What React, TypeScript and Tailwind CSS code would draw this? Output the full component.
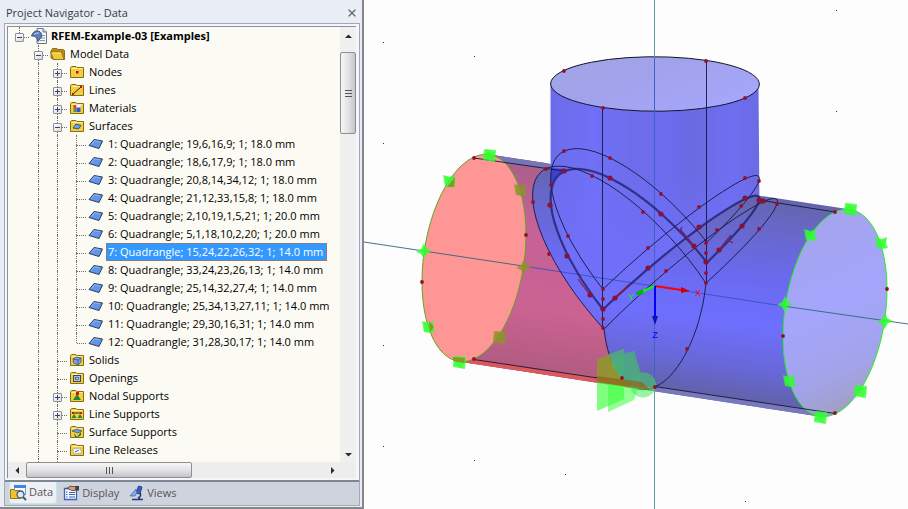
import { useState } from 'react';
import { X } from 'lucide-react';

type Guide = 'none' | 'line' | 'tee' | 'end' | 'plus' | 'minus' | 'root';
type IconName =
    | 'model'
    | 'open'
    | 'nodes'
    | 'lines'
    | 'materials'
    | 'surfaces'
    | 'surface'
    | 'solids'
    | 'openings'
    | 'nodal'
    | 'line'
    | 'surfaceSupport'
    | 'release';

interface TreeRow {
    label: string;
    icon: IconName;
    guides: Guide[];
}

type Point = [number, number];

const surfaces = [
    '1: Quadrangle; 19,6,16,9; 1; 18.0 mm',
    '2: Quadrangle; 18,6,17,9; 1; 18.0 mm',
    '3: Quadrangle; 20,8,14,34,12; 1; 18.0 mm',
    '4: Quadrangle; 21,12,33,15,8; 1; 18.0 mm',
    '5: Quadrangle; 2,10,19,1,5,21; 1; 20.0 mm',
    '6: Quadrangle; 5,1,18,10,2,20; 1; 20.0 mm',
    '7: Quadrangle; 15,24,22,26,32; 1; 14.0 mm',
    '8: Quadrangle; 33,24,23,26,13; 1; 14.0 mm',
    '9: Quadrangle; 25,14,32,27,4; 1; 14.0 mm',
    '10: Quadrangle; 25,34,13,27,11; 1; 14.0 mm',
    '11: Quadrangle; 29,30,16,31; 1; 14.0 mm',
    '12: Quadrangle; 31,28,30,17; 1; 14.0 mm',
];

const rows: TreeRow[] = [
    { label: 'RFEM-Example-03 [Examples]', icon: 'model', guides: ['root'] },
    { label: 'Model Data', icon: 'open', guides: ['none', 'minus'] },
    { label: 'Nodes', icon: 'nodes', guides: ['none', 'line', 'plus'] },
    { label: 'Lines', icon: 'lines', guides: ['none', 'line', 'plus'] },
    { label: 'Materials', icon: 'materials', guides: ['none', 'line', 'plus'] },
    { label: 'Surfaces', icon: 'surfaces', guides: ['none', 'line', 'minus'] },
    ...surfaces.map((label, i): TreeRow => ({
        label,
        icon: 'surface',
        guides: ['none', 'line', 'line', i === surfaces.length - 1 ? 'end' : 'tee'],
    })),
    { label: 'Solids', icon: 'solids', guides: ['none', 'line', 'tee'] },
    { label: 'Openings', icon: 'openings', guides: ['none', 'line', 'tee'] },
    { label: 'Nodal Supports', icon: 'nodal', guides: ['none', 'line', 'plus'] },
    { label: 'Line Supports', icon: 'line', guides: ['none', 'line', 'plus'] },
    { label: 'Surface Supports', icon: 'surfaceSupport', guides: ['none', 'line', 'tee'] },
    { label: 'Line Releases', icon: 'release', guides: ['none', 'line', 'tee'] },
];

function FolderBadge({ name }: { name: IconName }) {
    switch (name) {
        case 'nodes':
            return <rect x="7" y="6" width="2.500" height="2.500" fill="#e00000" />;
        case 'lines':
            return (
                <g>
                    <path d="M4 11 L12 4" stroke="#222" strokeWidth="1" />
                    <path d="M3 10h2v2h-2z M11 3h2v2h-2z" fill="#e00000" />
                </g>
            );
        case 'materials':
            return (
                <g>
                    <path d="M4.500 4h3v4h-3z" fill="#e23b3b" />
                    <path d="M7.500 4h4v4h-4z" fill="#f6f6f6" />
                    <path d="M4.500 8h3v3h-3z" fill="#3aa544" />
                    <path d="M7.500 6.500h4v4.500h-4z" fill="#3457d8" />
                </g>
            );
        case 'surfaces':
            return <path d="M4 9 L7 5 L12 6.500 L9.500 10z" fill="#6ea0ee" stroke="#25406f" strokeWidth=".8" />;
        case 'solids':
            return (
                <g stroke="#31477c" strokeWidth=".7">
                    <path d="M4 6 L7 4 L12 5 L12 9 L9 12 L4.500 10z" fill="#7ea0dc" />
                    <path d="M4 6 L9 7 L12 5 M9 7 L9 12" fill="none" />
                </g>
            );
        case 'openings':
            return (
                <g>
                    <rect x="4.500" y="4.500" width="7" height="6" fill="#a9c4f4" stroke="#32486f" />
                    <rect x="6.500" y="6.500" width="3" height="2" fill="#f3d64c" stroke="#32486f" strokeWidth=".7" />
                </g>
            );
        case 'nodal':
            return (
                <g>
                    <path d="M8 5 L12 11 L4 11z" fill="#1f8a2c" />
                    <rect x="7" y="3" width="3" height="3" fill="#e01010" />
                </g>
            );
        case 'line':
            return (
                <g>
                    <path d="M5 7 L7.500 11 L2.500 11z M11 7 L13.500 11 L8.500 11z" fill="#1f8a2c" />
                    <path d="M4 6 H12" stroke="#222" />
                    <path d="M3 5h2v2h-2z M11 5h2v2h-2z" fill="#e01010" />
                </g>
            );
        case 'surfaceSupport':
            return (
                <g>
                    <path d="M3 6 L8 4 L13 6 L9 8z" fill="#6e9bdf" stroke="#28456f" strokeWidth=".6" />
                    <path d="M5 8 L8 12 L12 7 L12 10 L9 12 L6 12z" fill="#256a4a" />
                </g>
            );
        case 'release':
            return (
                <g>
                    <path d="M3.500 6 L11 5 L13 10 L5 11z" fill="#f4f4f0" stroke="#999" strokeWidth=".6" />
                    <path d="M6 9 L10 7" stroke="#3e6ed2" />
                </g>
            );
        default:
            return null;
    }
}

function TreeIcon({ name }: { name: IconName }) {
    if (name === 'model') {
        return (
            <svg viewBox="0 0 16 16" className="h-4 w-4" aria-hidden="true">
                <path d="M6 .5 H12 L15.500 4 V15.500 H6z" fill="#f4f6fa" stroke="#6b7686" />
                <path d="M12 .5 V4 H15.500" fill="#cfd6e0" stroke="#6b7686" />
                <path d="M10 7.500h4M10 10h4M9 12.500h5" stroke="#8b96a8" />
                <path d="M.5 8 Q2 2.500 7 3 Q11.500 4 10.500 9 L7 13.500 Q6 7.500 .5 8z" fill="#5b80bd" stroke="#27426f" strokeWidth=".8" />
                <path d="M3 6.500 Q5 4.500 8 5" stroke="#c3d6f3" fill="none" />
            </svg>
        );
    }
    if (name === 'surface') {
        return (
            <svg viewBox="0 0 16 12" className="h-3 w-4" aria-hidden="true">
                <path d="M1 7.500 L6 1.500 L14.500 3 L11 10.500z" fill="#6095e8" stroke="#2b3d59" />
                <path d="M3.500 6.500 L6.500 2.800 L12 3.700" stroke="#8fb8f8" fill="none" />
            </svg>
        );
    }
    if (name === 'open') {
        return (
            <svg viewBox="0 0 16 14" className="h-[14px] w-4" aria-hidden="true">
                <path d="M1 4 V11 L3.500 12.500 H14.500 V3.500 L13 2.500 H8 L7 1.500 H2.500z" fill="#b98d12" stroke="#7a5c08" strokeWidth=".8" />
                <path d="M.5 5 H11.500 L14 12.500 H3.500z" fill="#edc93c" stroke="#8a6a0c" strokeWidth=".8" />
                <path d="M2 6 H11" stroke="#fbe893" />
            </svg>
        );
    }
    return (
        <svg viewBox="0 0 16 14" className="h-[14px] w-4" aria-hidden="true">
            <path d="M1.500 2.500 L2.500 1.500 H7 L8 2.500 H14.500 V12.500 H1.500z" fill="#f2cf3f" stroke="#8a6c13" />
            <path d="M2.500 3.500 H13.500" stroke="#fdf0a4" />
            <FolderBadge name={name} />
        </svg>
    );
}

function GuideCell({ kind, label }: { kind: Guide; label: string }) {
    const isBox = kind === 'plus' || kind === 'minus' || kind === 'root';
    const above = kind !== 'none';
    const below = kind === 'line' || kind === 'tee' || kind === 'plus' || kind === 'minus';
    const arm = kind === 'tee' || kind === 'end' || isBox;

    return (
        <span className="relative flex h-full w-[19px] shrink-0 items-center justify-center">
            {above && <span className="absolute left-[9px] top-0 h-[10px] border-l border-dotted border-[#6e6e6e]" />}
            {below && <span className="absolute bottom-0 left-[9px] h-2 border-l border-dotted border-[#6e6e6e]" />}
            {arm && <span className="absolute left-[10px] right-0 top-[10px] border-t border-dotted border-[#6e6e6e]" />}
            {isBox && (
                <button
                    type="button"
                    aria-label={(kind === 'plus' ? 'Expand ' : 'Collapse ') + label}
                    className="relative top-px flex h-[9px] w-[9px] items-center justify-center rounded-[1px] border border-[#8e8f8f] bg-gradient-to-br from-white to-[#dcdcdc]"
                >
                    <span className="absolute h-px w-[5px] bg-[#31408c]" />
                    {kind === 'plus' && <span className="absolute h-[5px] w-px bg-[#31408c]" />}
                </button>
            )}
        </span>
    );
}

function Tree() {
    const [selected, setSelected] = useState(surfaces[6]);

    return (
        <div className="flex min-h-0 min-w-0 flex-1 flex-col overflow-hidden bg-[#fbfbf3] pl-[2px]">
            <ul role="tree" aria-label="Project Navigator">
                {rows.map((row) => (
                    <li
                        key={row.label}
                        role="treeitem"
                        aria-selected={row.label === selected}
                        onClick={() => setSelected(row.label)}
                        className="flex h-[18px] items-center whitespace-nowrap"
                    >
                        {row.guides.map((kind, i) => (
                            <GuideCell key={i} kind={kind} label={row.label} />
                        ))}
                        <span className="flex w-5 shrink-0 justify-center">
                            <TreeIcon name={row.icon} />
                        </span>
                        <span
                            className={
                                row.label === selected
                                    ? 'h-[18px] bg-[#3399ff] pl-[2px] pr-1 leading-[18px] text-white outline-1 -outline-offset-1 outline-dotted outline-[#c8651a]'
                                    : row.icon === 'model'
                                      ? 'pl-[2px] font-bold leading-[18px]'
                                      : 'pl-[2px] leading-[18px]'
                            }
                        >
                            {row.label}
                        </span>
                    </li>
                ))}
            </ul>
            {/* guides run on to the lower edge of the list */}
            <div className="flex min-h-0 flex-1 gap-[18px] pl-7">
                <span className="border-l border-dotted border-[#6e6e6e]" />
                <span className="border-l border-dotted border-[#6e6e6e]" />
            </div>
        </div>
    );
}

function Arrow({ d }: { d: string }) {
    return (
        <svg viewBox="0 0 7 7" className="h-[7px] w-[7px]" aria-hidden="true">
            <path d={d} fill="#2b2b2b" />
        </svg>
    );
}

function Navigator() {
    return (
        <aside className="flex w-91 shrink-0 flex-col border-b-2 border-r-2 border-[#84868c] bg-[#e9edf6] pb-px pl-1 pr-[2px] pt-[3px]">
            <header className="flex h-5 items-center justify-between pl-[2px] text-[#3c3c3c]">
                <h1 className="leading-5">Project Navigator - Data</h1>
                <button type="button" aria-label="Close" className="flex h-4 w-4 items-center justify-center text-[#666]">
                    <X size={12} strokeWidth={2.5} />
                </button>
            </header>

            <div className="flex min-h-0 flex-1 flex-col border border-[#a3a8b8] bg-[#cfd3dd]">
                <div className="flex min-h-0 flex-1 flex-col border-b-2 border-[#7d8694] bg-[#f4f6fb] py-[2px] pl-[2px] pr-[3px]">
                    <div className="flex min-h-0 flex-1 flex-col border-l border-t border-[#8c909a]">
                        <div className="flex min-h-0 flex-1">
                            <Tree />
                            <div className="flex w-4 shrink-0 flex-col bg-[#f0f0f0]">
                                <button type="button" aria-label="Scroll up" className="flex h-[25px] items-start justify-center pt-[6px]">
                                    <Arrow d="M3.500 1.500 L7 5 H0z" />
                                </button>
                                <div className="flex h-[82px] flex-col items-center justify-center gap-[2px] rounded-[2px] border border-[#8f8f8f] bg-gradient-to-r from-[#f6f6f6] via-[#e4e4e6] to-[#c4c5ca]">
                                    <span className="h-px w-[7px] bg-[#555]" />
                                    <span className="h-px w-[7px] bg-[#555]" />
                                    <span className="h-px w-[7px] bg-[#555]" />
                                </div>
                                <button type="button" aria-label="Scroll down" className="mt-auto flex h-4 items-center justify-center">
                                    <Arrow d="M3.500 5.500 L0 2 H7z" />
                                </button>
                            </div>
                        </div>
                        <div className="flex h-4 shrink-0 bg-[#ededed] pr-4">
                            <button type="button" aria-label="Scroll left" className="flex w-[18px] items-center justify-center">
                                <Arrow d="M1.500 3.500 L5 0 V7z" />
                            </button>
                            <div className="flex w-1/2 items-center justify-center gap-[2px] rounded-[2px] border border-[#8f8f8f] bg-gradient-to-b from-[#f6f6f6] via-[#e4e4e6] to-[#c4c5ca]">
                                <span className="h-[7px] w-px bg-[#555]" />
                                <span className="h-[7px] w-px bg-[#555]" />
                                <span className="h-[7px] w-px bg-[#555]" />
                            </div>
                            <button type="button" aria-label="Scroll right" className="ml-auto flex w-4 items-center justify-center">
                                <Arrow d="M5.500 3.500 L2 0 V7z" />
                            </button>
                        </div>
                    </div>
                </div>

                <nav className="flex h-[23px] shrink-0 items-start gap-[6px] pl-1 text-[#54565c]">
                    <button type="button" className="flex h-[22px] items-center gap-[2px] rounded-b-[3px] border border-t-0 border-[#c3e8de] bg-[#eef0f5] pr-[3px]">
                        <svg viewBox="0 0 17 16" className="h-4 w-[17px]" aria-hidden="true">
                            <rect x="4.500" y=".5" width="11" height="9" fill="#f8fbff" stroke="#6f9be0" />
                            <rect x="4" y="0" width="12" height="3" fill="#3f83ec" />
                            <path d="M.5 4.500 H4 L5 5.500 H9.500 V13.500 H.5z" fill="#f0c22e" stroke="#9c7611" />
                            <circle cx="10.500" cy="9.500" r="3.500" fill="#d6e8fb" stroke="#4a5668" strokeWidth="1.300" />
                            <path d="M13 12 L16 15" stroke="#4a5668" strokeWidth="2" />
                        </svg>
                        Data
                    </button>
                    <button type="button" className="flex h-[22px] items-center gap-[2px]">
                        <svg viewBox="0 0 17 16" className="h-4 w-[17px]" aria-hidden="true">
                            <path d="M1.500 3.500 H13.500 V14.500 H1.500z" fill="#f5f8ff" stroke="#3f62b4" strokeWidth="1.300" />
                            <path d="M3 7h1.500M3 9.500h1.500M3 12h1.500" stroke="#3f62b4" />
                            <path d="M6 7.500h6M6 9.500h6M6 12h6" stroke="#3f62b4" />
                            <path d="M4 3.500 Q7 0 10 1.500 L13 1.500 V5 L11 5.500 Q8 6 7 4.500z" fill="#d5a273" stroke="#4f3a2b" strokeWidth=".8" />
                            <path d="M12.500 1 H16 V5.500 H12.500z" fill="#3b4048" />
                        </svg>
                        Display
                    </button>
                    <button type="button" className="ml-1 flex h-[22px] items-center gap-[2px]">
                        <svg viewBox="0 0 16 16" className="h-4 w-4" aria-hidden="true">
                            <path d="M9.500 1 L13 2 L11 9 L7 8z" fill="#315fd0" stroke="#1c336f" strokeWidth=".8" />
                            <path d="M7 4 L1 11 L6 11 L8 8z" fill="#86a7e6" stroke="#3e5fa9" strokeWidth=".7" />
                            <path d="M11 8 Q13 11 9 13 M3 14.500 H14 M9 12 L11 14" stroke="#253c7c" strokeWidth="1.600" fill="none" />
                        </svg>
                        Views
                    </button>
                </nav>
            </div>
        </aside>
    );
}

// Axonometric projection of a model point, radius of both pipes = 1
function project(x: number, y: number, z: number): Point {
    return [655 + 90.5 * x + 52 * y, 286 + 13.8 * x - 23.5 * y - 101 * z];
}

function sample(from: number, to: number, fn: (t: number) => Point): Point[] {
    const steps = 36;
    return Array.from({ length: steps + 1 }, (_, i) => fn(((from + ((to - from) * i) / steps) * Math.PI) / 180));
}

function toPoints(list: Point[]): string {
    return list.map(([x, y]) => `${x.toFixed(1)},${y.toFixed(1)}`).join(' ');
}

const { sin, cos } = Math;
const weld = (side: number, lift: number) => (t: number) => project(side * cos(t), sin(t), cos(t) + lift);
const collar = (side: number) => (t: number) => project(side * (cos(t) + 0.2), sin(t), cos(t));

const weldLeft = sample(-90, 90, weld(-1, 0));
const weldRight = sample(-90, 90, weld(1, 0));
const upperLeft = sample(-90, 90, weld(-1, 0.2));
const upperRight = sample(-90, 90, weld(1, 0.2));
const collarLeft = sample(-101.5, 101.5, collar(-1));
const collarRight = sample(-101.5, 101.5, collar(1));
const girth = sample(101.5, 258.5, (t) => project(0, sin(t), cos(t)));

// Red part of the run pipe: bounded by the collar and by the lower girth line
const redBody = [
    [489.5, 154.6] as Point,
    [546, 163] as Point,
    ...sample(0, -101.5, collar(-1)),
    ...sample(258.5, 197, (t) => project(0, sin(t), cos(t))),
    [458.5, 361.4] as Point,
    ...sample(197, 17, (t) => [474 + 52 * sin(t), 258 - 101 * cos(t) - 23.5 * sin(t)]),
];

const branchBody = [
    [550.5, 84] as Point,
    ...sample(-30, -90, weld(-1, 0)),
    ...sample(-90, 30, weld(1, 0)),
    [758.5, 84] as Point,
];

const nodes: Point[] = [
    [564, 71], [706, 61], [745, 98], [603, 108], [564, 151], [610, 158], [661, 194], [592, 176],
    [551, 185], [546, 169], [474, 158], [533, 202], [549, 254], [568, 236], [526, 235], [422, 282],
    [474, 359], [745, 178], [759, 181], [777, 204], [741, 206], [699, 207], [643, 212], [717, 230],
    [759, 229], [706, 243], [706, 253], [706, 273], [706, 283], [648, 248], [666, 271], [603, 289],
    [603, 299], [603, 319], [603, 328], [687, 349], [622, 378], [655, 387], [835, 212], [887, 289],
    [783, 336], [835, 413],
];

const heavyNodes: Point[] = [
    [564, 171], [610, 178], [550, 205], [567, 256], [590, 295], [615, 298], [603, 309], [648, 268],
    [661, 214], [694, 246], [719, 250], [706, 262], [699, 227], [742, 226], [745, 198], [759, 200], [763, 201],
];

const gridDots: Point[] = [
    [383, 42], [383, 143], [383, 345], [383, 446], [474, 56], [474, 258], [474, 460], [565, 474],
    [655, 84], [745, 400], [745, 501], [836, 10], [836, 111], [836, 313],
];

const boxShape = '-5,-6 7,-5 6,7 -6,5';
const starShape = '-6,-6 0,-4 6,-6 5,0 7,5 1,6 -4,5 -5,0';
const crossShape = '0,-8 2,-3 8,0 3,2 0,8 -3,3 -8,1 -3,-2';

const supports = [
    { x: 489, y: 155, shape: boxShape, hidden: false },
    { x: 449, y: 181, shape: starShape, hidden: false },
    { x: 424, y: 251, shape: crossShape, hidden: false },
    { x: 428, y: 327, shape: starShape, hidden: false },
    { x: 459, y: 362, shape: boxShape, hidden: false },
    { x: 499, y: 337, shape: boxShape, hidden: true },
    { x: 524, y: 267, shape: crossShape, hidden: true },
    { x: 520, y: 190, shape: starShape, hidden: true },
    { x: 850, y: 209, shape: boxShape, hidden: false },
    { x: 810, y: 235, shape: starShape, hidden: false },
    { x: 785, y: 304, shape: crossShape, hidden: false },
    { x: 789, y: 381, shape: starShape, hidden: false },
    { x: 820, y: 417, shape: boxShape, hidden: false },
    { x: 860, y: 391, shape: boxShape, hidden: false },
    { x: 885, y: 321, shape: crossShape, hidden: false },
    { x: 881, y: 243, shape: starShape, hidden: false },
];

function ModelView() {
    return (
        <main className="min-w-0 flex-1 bg-[#fdfdfd]">
            <svg viewBox="364 0 544 509" className="h-full w-full" role="img" aria-label="Pipe model">
                <defs>
                    <linearGradient id="run" gradientUnits="userSpaceOnUse" x1="670" y1="182" x2="640" y2="389">
                        <stop offset="0" stopColor="#6464a8" />
                        <stop offset=".12" stopColor="#6767c4" />
                        <stop offset=".4" stopColor="#6a6af0" />
                        <stop offset=".62" stopColor="#6f6fff" />
                        <stop offset=".82" stopColor="#6868da" />
                        <stop offset="1" stopColor="#6161a4" />
                    </linearGradient>
                    <linearGradient id="red" gradientUnits="userSpaceOnUse" x1="520" y1="160" x2="490" y2="365">
                        <stop offset="0" stopColor="#a8608a" />
                        <stop offset=".3" stopColor="#c56296" />
                        <stop offset=".7" stopColor="#cb6292" />
                        <stop offset="1" stopColor="#b05c80" />
                    </linearGradient>
                    <linearGradient id="branch" x1="0" x2="1" y1="0" y2="0">
                        <stop offset="0" stopColor="#6c6cea" />
                        <stop offset=".2" stopColor="#7070f8" />
                        <stop offset=".38" stopColor="#6d6dec" />
                        <stop offset=".55" stopColor="#6b6bee" />
                        <stop offset=".68" stopColor="#6a6ae2" />
                        <stop offset=".85" stopColor="#6e6ef2" />
                        <stop offset="1" stopColor="#6b6be4" />
                    </linearGradient>
                    <linearGradient id="branchFade" x1="0" x2="0" y1="0" y2="1">
                        <stop offset=".4" stopColor="#6f6ffa" stopOpacity="0" />
                        <stop offset=".8" stopColor="#6f6ffa" />
                    </linearGradient>
                    <linearGradient id="cap" x1="0" x2="1" y1="0" y2="0">
                        <stop offset="0" stopColor="#a3a3e6" />
                        <stop offset=".4" stopColor="#a2a2ec" />
                        <stop offset="1" stopColor="#a6a6fb" />
                    </linearGradient>
                    <linearGradient id="end" x1="0" x2="0" y1="0" y2="1">
                        <stop offset="0" stopColor="#a4a4ee" />
                        <stop offset=".45" stopColor="#a5a5fd" />
                        <stop offset=".8" stopColor="#a3a3ea" />
                        <stop offset="1" stopColor="#a0a0c4" />
                    </linearGradient>
                </defs>

                {gridDots.map(([x, y]) => (
                    <rect key={`${x}-${y}`} x={x} y={y} width="1" height="1" fill="#333" />
                ))}

                {/* run pipe */}
                <polygon points="489.500,154.600 850.500,209.600 835,313 819.500,416.400 458.500,361.400" fill="url(#run)" />
                <polygon points={toPoints(redBody)} fill="url(#red)" />
                <polygon points="474,158 489.500,154.600 551,164 551,169.500 546,169" fill="#7676b6" />
                <polygon points="458.500,361.400 474,359.500 655,386.500 650,390.600" fill="#dd5858" />
                <polygon points="655,386.500 835,413.500 819.500,416.400 650,390.600" fill="#7878bc" />

                {/* branch pipe */}
                <polygon points={toPoints(branchBody)} fill="url(#branch)" />
                <polygon points={toPoints(branchBody)} fill="url(#branchFade)" />
                <polygon points="551,168 567,169 557,175 551,186" fill="#3c40cc" />
                <circle r="1" transform="matrix(90.5 13.8 52 -23.5 655 84)" fill="url(#cap)" stroke="#14142c" vectorEffect="non-scaling-stroke" />

                {/* pipe ends */}
                <circle r="1" transform="matrix(52 -23.5 0 101 474 258)" fill="#ff9696" stroke="#63a51c" vectorEffect="non-scaling-stroke" />
                <circle r="1" transform="matrix(52 -23.5 0 101 835 313)" fill="url(#end)" stroke="#22ee22" vectorEffect="non-scaling-stroke" />

                {/* global axes */}
                <path d="M654.500 0 V57 M654.500 390 V509" stroke="#5f9f9f" />
                <path d="M654.500 57 V390" stroke="#4560c4" />
                <path d="M364 242 L533 267.500 M783 306 L908 324" stroke="#2c6878" strokeWidth=".9" />
                <path d="M533 267.500 L783 306" stroke="#3850c4" strokeWidth=".9" />

                {/* edges and intersection curves */}
                <g fill="none" stroke="#15153c" strokeWidth=".9">
                    <path d="M474 158 L564 171 M759 200 L835 212 M474 359.500 L835 413.500" />
                    <path d="M602.500 108 V328 M706.500 61 V283" />
                    <polyline points={toPoints(collarLeft)} />
                    <polyline points={toPoints(collarRight)} />
                    <polyline points={toPoints(upperLeft)} />
                    <polyline points={toPoints(upperRight)} />
                    <polyline points={toPoints(girth)} />
                    <polyline points={toPoints(weldLeft)} stroke="#20206a" strokeWidth="2.200" strokeOpacity=".8" />
                    <polyline points={toPoints(weldRight)} stroke="#20206a" strokeWidth="2.200" strokeOpacity=".8" />
                </g>
                <path d="M578 279 L590 295 M615 298 L628 286" stroke="#a01028" strokeWidth="1.200" />
                <path d="M694 246 L680 229 M719 250 L731 235 M728 240 L733 243 M679 232 L682 227" stroke="#7a1e62" strokeWidth="1.400" />

                {/* line support under the branch */}
                <g>
                    <polygon points="597,360 624,349 624,399 597,411" fill="#3cff3c" opacity=".65" />
                    <polygon points="608,364 634,351 641,380 634,400 608,412" fill="#3cff3c" opacity=".55" />
                    <ellipse cx="643" cy="385" rx="13" ry="12.500" fill="#3cf05c" opacity=".55" />
                    <polygon points="597,360 609,354 614,368 622,379 630,387 597,382" fill="#9a8a32" opacity=".9" />
                    <polygon points="609,354 624,349 624,353 634,351 641,373 648,374 655,379 655,387 640,387 628,384 616,371" fill="#4fa088" opacity=".85" />
                    <polygon points="597,376 642,382 650,390 597,382" fill="#8f6a20" opacity=".8" />
                </g>

                {/* supports around the pipe ends */}
                {supports.map((s) => (
                    <g key={`${s.x}-${s.y}`} transform={`translate(${s.x} ${s.y})`} fill={s.hidden ? '#8b9428' : '#2dff2d'}>
                        <polygon points={s.shape} opacity=".75" />
                        <polygon points={s.shape} opacity=".6" transform="rotate(12) scale(.8)" />
                    </g>
                ))}
                <path d="M447 187 L455 177 L454 187z M429 321 L434 327 L430 332z M453 357 L465 358 L464 363 L453 361z" fill="#7ba022" />

                {nodes.map(([x, y]) => (
                    <circle key={`${x}-${y}`} cx={x} cy={y} r="1.900" fill="#93102c" />
                ))}
                {heavyNodes.map(([x, y]) => (
                    <circle key={`${x}-${y}`} cx={x} cy={y} r="2.600" fill="#86123a" />
                ))}

                {/* origin */}
                <path d="M655 286 L682 290" stroke="#f00" strokeWidth="2" />
                <path d="M681 287 L690 291 L681 293z" fill="#c80010" />
                <path d="M655 286 L641 292" stroke="#0f0" strokeWidth="2" />
                <path d="M643 289 L635 293 L639 296 L643 294z" fill="#00b400" />
                <path d="M655 286 V317" stroke="#00f" strokeWidth="2" />
                <path d="M652 316 H658 L655 325z" fill="#1010b0" />
                <g fontFamily="Liberation Sans, sans-serif" fontSize="9" textAnchor="middle">
                    <text x="698" y="296" fill="#f00">X</text>
                    <text x="631" y="300" fill="#0e0">Y</text>
                    <text x="655" y="338" fill="#00f">Z</text>
                </g>
            </svg>
        </main>
    );
}

export default function App() {
    return (
        <div className="flex h-screen overflow-hidden bg-[#fdfdfd] font-['Open_Sans',sans-serif] text-[11px] text-black">
            <Navigator />
            <ModelView />
        </div>
    );
}
